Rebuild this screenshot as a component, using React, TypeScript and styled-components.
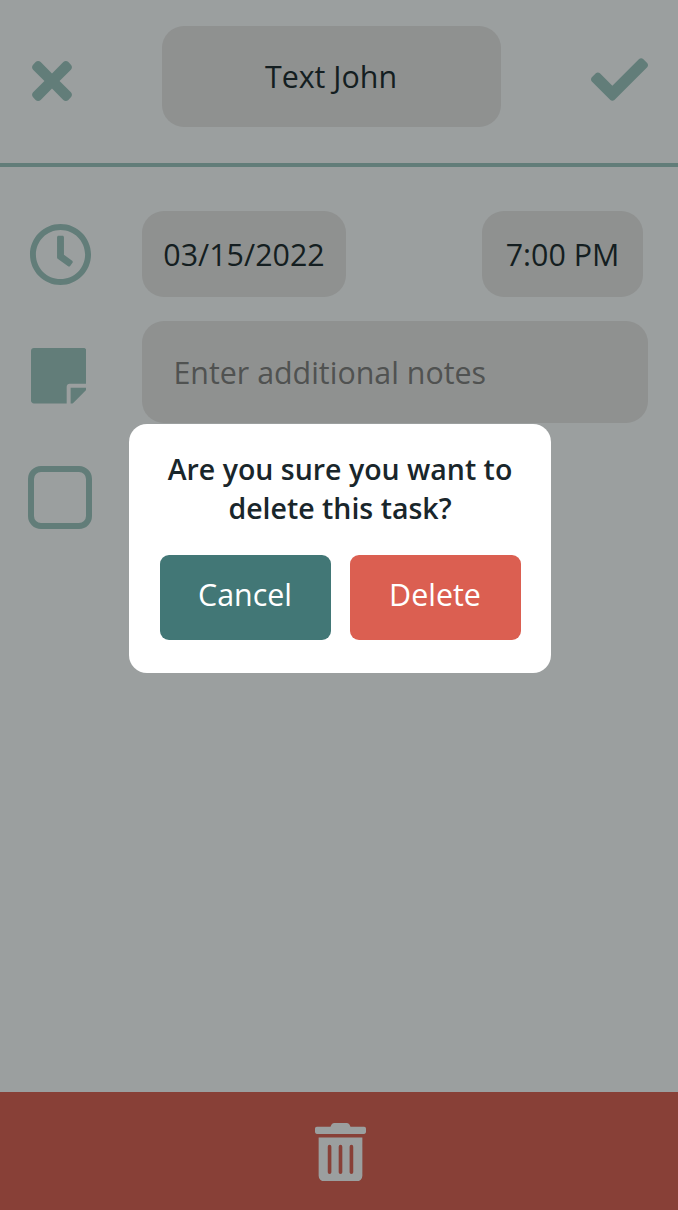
import React from 'react';
import styled, { createGlobalStyle } from 'styled-components';
import { FaTimes, FaCheck, FaRegClock, FaStickyNote, FaTrashAlt } from 'react-icons/fa';

const color = {
  page: '#9b9f9f',
  field: '#8f9190',
  accent: '#627d79',
  ink: '#141e21',
  muted: '#505251',
  footer: '#884037',
  teal: '#427776',
  coral: '#db5f51',
  heading: '#19262b',
};

const GlobalStyle = createGlobalStyle`
  * { box-sizing: border-box; }
  body { margin: 0; background: ${color.page}; }
  svg { display: block; }
`;

const Screen = styled.div`
  position: relative;
  display: flex;
  flex-direction: column;
  width: 678px;
  height: 1210px;
  overflow: hidden;
  background: ${color.page};
  color: ${color.ink};
  font-family: 'Open Sans', 'Noto Sans', sans-serif;
  font-size: 30.4px;
`;

const Header = styled.header`
  display: flex;
  justify-content: space-between;
  height: 167px;
  padding: 25.5px 30.5px 0 32px;
  border-bottom: 4px solid ${color.accent};
`;

const IconButton = styled.button<{ $top: number }>`
  height: max-content;
  margin: ${(p) => p.$top}px 0 0;
  padding: 0;
  border: 0;
  background: none;
  color: ${color.accent};
`;

const Field = styled.div<{ $width: number; $height: number; $placeholder?: boolean }>`
  display: flex;
  align-items: center;
  justify-content: ${(p) => (p.$placeholder ? 'flex-start' : 'center')};
  width: ${(p) => p.$width}px;
  height: ${(p) => p.$height}px;
  padding: ${(p) => (p.$placeholder ? '0 0 0 31.4px' : '0')};
  border-radius: 22px;
  background: ${color.field};
  color: ${(p) => (p.$placeholder ? color.muted : color.ink)};
  white-space: nowrap;
`;

const TitleField = styled(Field)`
  margin-right: 0.5px;
`;

const Form = styled.main`
  flex: 1;
  display: flex;
  flex-direction: column;
  gap: 24px;
  padding: 44px 30px 0 28px;
`;

const Row = styled.div`
  display: grid;
  grid-template-columns: 114px 1fr;
`;

const RowIcon = styled.div<{ $top: number; $left: number }>`
  padding: ${(p) => p.$top}px 0 0 ${(p) => p.$left}px;
  color: ${color.accent};
`;

const DateTime = styled.div`
  display: flex;
  justify-content: space-between;
  padding-right: 5px;
`;

const Checkbox = styled.div`
  width: 64px;
  height: 63px;
  margin-top: 19px;
  border: 6px solid ${color.accent};
  border-radius: 13px;
`;

const Footer = styled.footer`
  display: flex;
  justify-content: center;
  height: 118px;
  padding: 31px 0 0 2px;
  background: ${color.footer};
  color: ${color.page};
`;

const Overlay = styled.div`
  position: absolute;
  inset: 0;
  display: flex;
  justify-content: center;
  align-items: flex-start;
  padding: 424px 0 0 2px;
`;

const Dialog = styled.section`
  width: 422px;
  height: 249px;
  padding: 25.5px 30.5px 0;
  border-radius: 18px;
  background: #fff;
`;

const Question = styled.h1`
  margin: 0;
  color: ${color.heading};
  font-size: 28.5px;
  font-weight: 600;
  line-height: 39px;
  text-align: center;
  white-space: nowrap;
`;

const Actions = styled.div`
  display: flex;
  gap: 19px;
  margin-top: 27.5px;
`;

const ActionButton = styled.button<{ $bg: string }>`
  width: 171px;
  height: 85px;
  padding: 0 0 6px;
  border: 0;
  border-radius: 9px;
  background: ${(p) => p.$bg};
  color: #fff;
  font: inherit;
`;

export default function App() {
  return (
    <>
      <GlobalStyle />
      <Screen>
        <Header>
          <IconButton $top={26} aria-label="Close">
            <FaTimes style={{ width: 40, height: 58 }} />
          </IconButton>
          <TitleField $width={339} $height={101}>Text John</TitleField>
          <IconButton $top={25} aria-label="Save">
            <FaCheck size={57} />
          </IconButton>
        </Header>
        <Form>
          <Row>
            <RowIcon $top={11.5} $left={0.8}><FaRegClock size={63} /></RowIcon>
            <DateTime>
              <Field $width={204} $height={86}>03/15/2022</Field>
              <Field $width={161} $height={86}>7:00 PM</Field>
            </DateTime>
          </Row>
          <Row>
            <RowIcon $top={23} $left={2.7}>
              <FaStickyNote style={{ width: 55.5, height: 63.5 }} />
            </RowIcon>
            <Field $width={506} $height={102} $placeholder>Enter additional notes</Field>
          </Row>
          <Checkbox />
        </Form>
        <Footer><FaTrashAlt style={{ width: 51, height: 58.3 }} /></Footer>
        <Overlay>
          <Dialog role="dialog">
            <Question>Are you sure you want to<br />delete this task?</Question>
            <Actions>
              <ActionButton $bg={color.teal}>Cancel</ActionButton>
              <ActionButton $bg={color.coral}>Delete</ActionButton>
            </Actions>
          </Dialog>
        </Overlay>
      </Screen>
    </>
  );
}
